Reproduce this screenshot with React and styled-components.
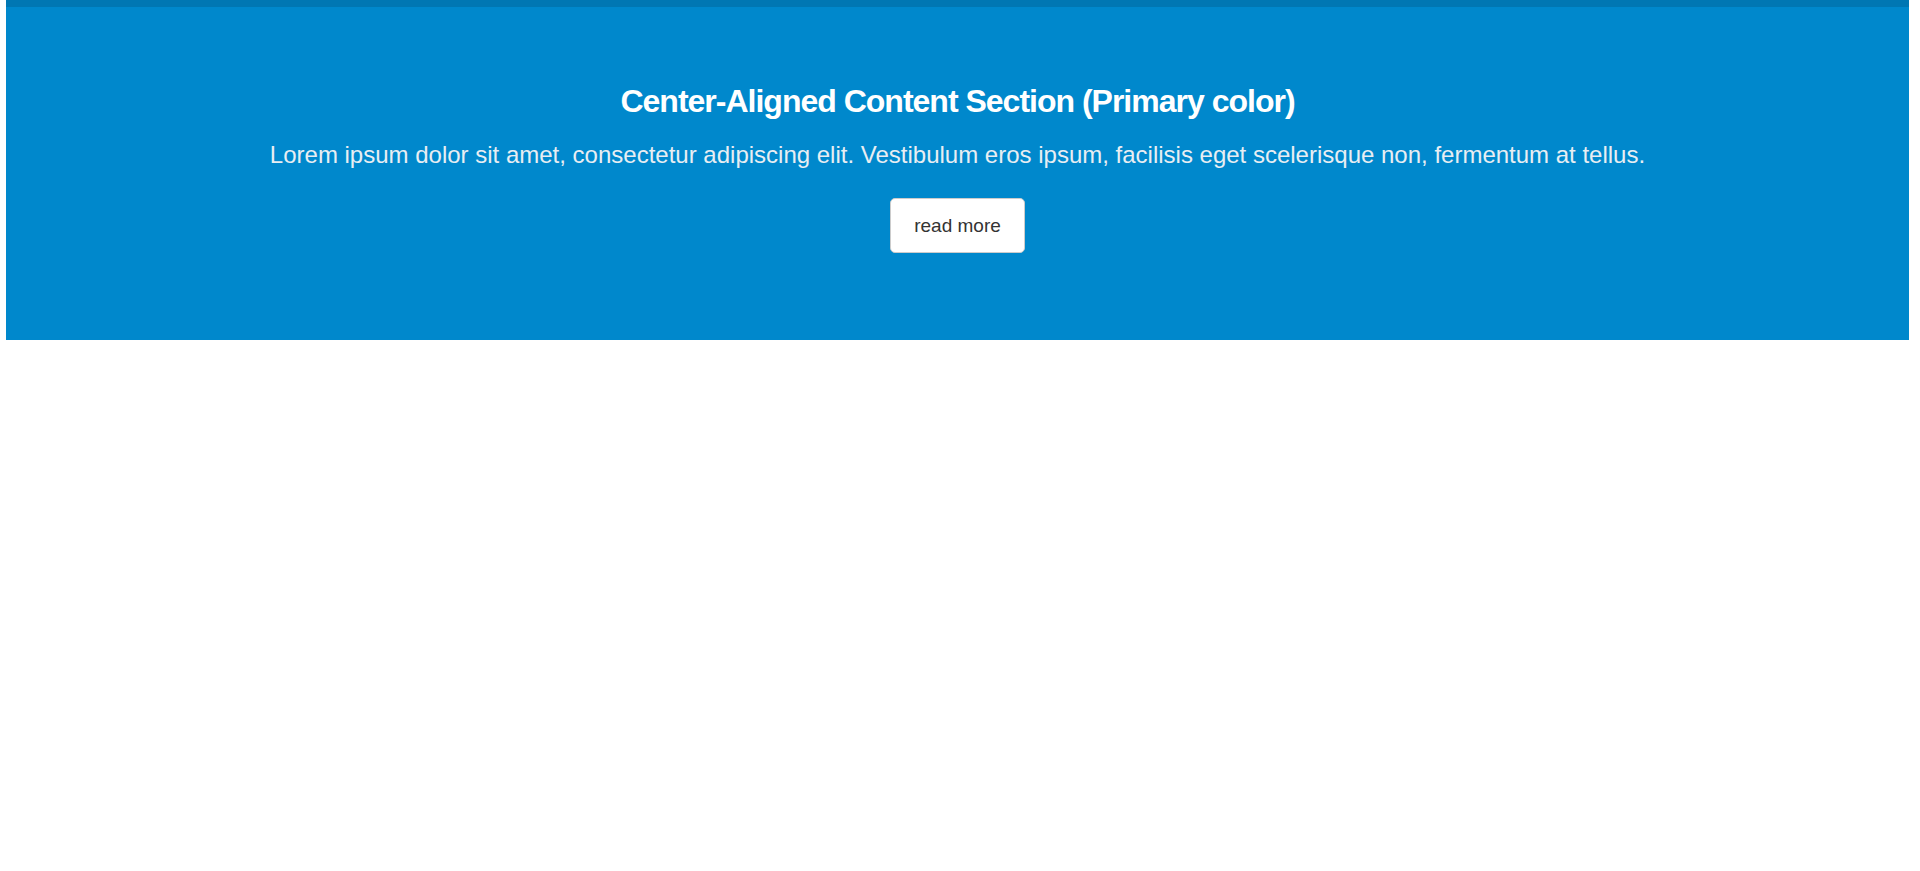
import styled, { createGlobalStyle } from "styled-components"

const Global = createGlobalStyle`
    body{
        margin: 0;
        background: #ffffff;
        font-family: "Liberation Sans", Arial, sans-serif;
    }
`;

export default function App(){
    return (
        <Page>
            <Global/>
            <Hero>
                <h1>Center-Aligned Content Section (Primary color)</h1>
                <p>
                    Lorem ipsum dolor sit amet, consectetur adipiscing elit. Vestibulum eros ipsum, facilisis eget scelerisque non, fermentum at tellus.
                </p>
                <Button>read more</Button>
            </Hero>
        </Page>
    )
}

const Page = styled.div`
    padding: 0 11px 0 6px;
    min-height: 871px;
    box-sizing: border-box;
`;

const Hero = styled.section`
    background-color: #0088cc;
    border-top: 7px solid #0077b3;
    padding: 75px 20px 87px;
    display: flex;
    flex-direction: column;
    align-items: center;
    text-align: center;

    & h1{
        margin: 0;
        font-size: 32px;
        line-height: 1.2;
        font-weight: 700;
        letter-spacing: -1px;
        color: #ffffff;
    }
    & p{
        margin: 17px 0 25px;
        font-size: 24px;
        line-height: 1.5;
        color: #e8eef3;
    }
`;

const Button = styled.button`
    width: 135px;
    height: 55px;
    background: #ffffff;
    border: 1px solid #cccccc;
    border-radius: 5px;
    font-family: "Liberation Sans", Arial, sans-serif;
    font-size: 19px;
    color: #333333;
    cursor: pointer;
`;
